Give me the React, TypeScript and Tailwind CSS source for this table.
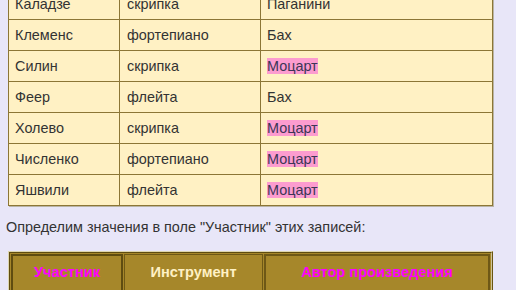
import React from "react";

const ROWS = [
  { name: "Каладзе", instrument: "скрипка", author: "Паганини" },
  { name: "Клеменс", instrument: "фортепиано", author: "Бах" },
  { name: "Силин", instrument: "скрипка", author: "Моцарт" },
  { name: "Феер", instrument: "флейта", author: "Бах" },
  { name: "Холево", instrument: "скрипка", author: "Моцарт" },
  { name: "Численко", instrument: "фортепиано", author: "Моцарт" },
  { name: "Яшвили", instrument: "флейта", author: "Моцарт" },
];

export default function App() {
  return (
    <div className="w-[516px] h-[290px] overflow-hidden bg-[#e8e6f8] font-['Liberation_Sans',Arial,sans-serif] text-[14.4px] text-[#333]">
      <div className="pl-[8px] -mt-[12px]">
        <table className="w-[485px] border-collapse bg-[#fff1c4] shadow-[1px_1px_0_#b9b4a6]">
          <colgroup>
            <col className="w-[111px]" />
            <col className="w-[141px]" />
            <col />
          </colgroup>
          <tbody>
            {ROWS.map((r) => (
              <tr key={r.name} className="h-[31px]">
                <td className="border border-[#8c7636] px-[6px] py-0 leading-[17px]">{r.name}</td>
                <td className="border border-[#8c7636] px-[7px] py-0 leading-[17px]">{r.instrument}</td>
                <td className="border border-[#8c7636] px-[6px] py-0 leading-[17px]">
                  {r.author === "Моцарт" ? (
                    <span className="bg-[#fc9ccf] text-[#3b3656]">{r.author}</span>
                  ) : (
                    r.author
                  )}
                </td>
              </tr>
            ))}
          </tbody>
        </table>
      </div>

      <p className="mt-[13px] pl-[6px] leading-[17px]">
        Определим значения в поле "Участник" этих записей:
      </p>

      <div className="ml-[8px] mt-[15px] w-[485px] border border-[#ddd5ae] border-r-[#6a5512] border-b-[#6a5512]">
        <div className="border border-[#5f4c10] border-r-[#cfc49a] bg-[#a6872a] p-[1px] flex gap-[1px] font-bold text-[14.6px]">
          <div className="w-[112px] h-[38px] border-2 border-[#5f4c10] flex items-center justify-center text-[#ff00ff]">
            Участник
          </div>
          <div className="w-[139px] h-[38px] border border-[#6e5816] flex items-center justify-center text-[#fff1c4]">
            Инструмент
          </div>
          <div className="flex-1 h-[38px] border-2 border-[#6e5816] flex items-center justify-center text-[#ff00ff]">
            Автор произведения
          </div>
        </div>
      </div>
    </div>
  );
}
